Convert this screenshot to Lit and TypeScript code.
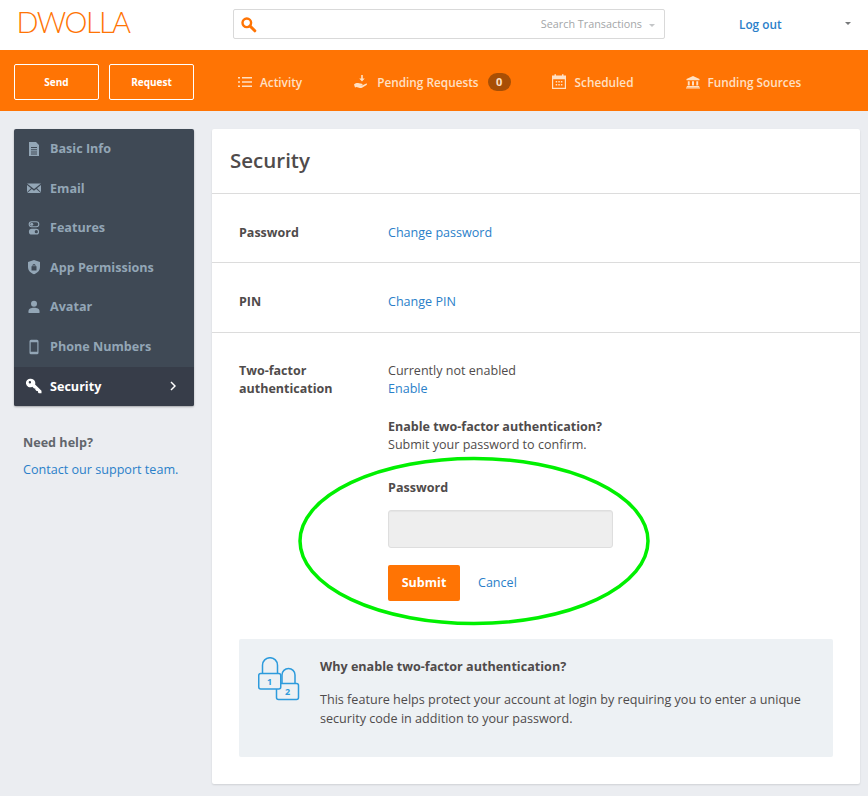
import { LitElement, html, css, svg } from "lit";
import { customElement } from "lit/decorators.js";

const ic = (body: unknown, size = 16, vb = "0 0 16 16") =>
  html`<svg width=${size} height=${size} viewBox=${vb} fill="currentColor" aria-hidden="true">${body}</svg>`;

const icons: Record<string, unknown> = {
  doc: ic(svg`<path fill-rule="evenodd" d="M3 1h7l3 3v11H3V1zm2 5v1h6V6H5zm0 2.200v1h6v-1H5zm0 2.200v1h6v-1H5zm0 2.200v.9h6v-.9H5z"/>`),
  mail: ic(svg`<path d="M1 3.500h14L8 9 1 3.500zM1 5l4 3.300L1 12.200V5zm14 0v7.200l-4-3.900L15 5zM5.800 9 8 10.800 10.200 9l4.600 4H1.200l4.600-4z"/>`),
  toggles: ic(svg`<rect x="3.200" y="1.700" width="9.600" height="5" rx="2.500" fill="none" stroke="currentColor" stroke-width="1.100"/><circle cx="5.700" cy="4.200" r="1.500"/><path fill-rule="evenodd" d="M5.800 8.800h4.400a2.900 2.900 0 0 1 0 5.800H5.800a2.900 2.900 0 0 1 0-5.800zm4.500 1.300a1.600 1.600 0 1 0 0 3.200 1.600 1.600 0 0 0 0-3.200z"/>`),
  shield: ic(svg`<path fill-rule="evenodd" d="M8 1l6 2v5c0 3.500-2.500 6-6 7.200C4.500 14 2 11.500 2 8V3l6-2zM6.500 6.500V7.300H5.500v4.200h5V7.300h-1V6.500a1.500 1.500 0 0 0-3 0zm.9.800v-.8a.6.600 0 0 1 1.200 0v.8H7.400z"/>`),
  user: ic(svg`<circle cx="8" cy="4.800" r="3"/><path d="M2.500 14v-1.800C2.500 9.800 5 8.800 8 8.800s5.500 1 5.500 3.400V14h-11z"/>`),
  phone: ic(svg`<path fill-rule="evenodd" d="M5 .8h6A1.500 1.500 0 0 1 12.500 2.300v11.400A1.500 1.500 0 0 1 11 15.200H5a1.500 1.500 0 0 1-1.500-1.500V2.300A1.500 1.500 0 0 1 5 .8zm-.3 2.400v9.600h6.600V3.200H4.700z"/>`),
  key: ic(svg`<path fill-rule="evenodd" d="M5 .8a4.300 4.300 0 0 1 4.100 5.600l6.400 6.300v2.500h-2.700l-.9-.9v-1.300h-1.300L9.300 11.700v-1.200H8.100L6.300 8.800A4.300 4.300 0 1 1 5 .8zM3.900 3a1.200 1.200 0 1 0 0 2.400 1.200 1.200 0 0 0 0-2.400z"/>`),
  list: ic(svg`<path d="M1 3h2v1.600H1zM5 3h10v1.600H5zM1 7.200h2v1.600H1zM5 7.200h10v1.600H5zM1 11.400h2V13H1zM5 11.400h10V13H5z"/>`),
  hand: ic(svg`<path d="M7.200 1h1.600v3.500h2L8 7.600 5.200 4.500h2V1z"/><path d="M0 10.500c1.800-1.600 3.400-1.800 5-1.300l2.800.6c1.200.3 1 1.600-.2 1.500l-2-.2 2.400.5 3.800-1.900c1-.4 1.700.5.800 1.200l-4.600 2.900c-1 .5-2 .3-3 0l-2.500-.8-1.500.6L0 10.500z"/>`),
  cal: ic(svg`<path fill-rule="evenodd" d="M0 1.500h2.500V.3H4v1.200h6V.3h1.500v1.200H14V15H0V1.500zm1.200 3.800v8.500h11.600V5.300H1.200zM3.700 7h1.500v1.500H3.700zm2.600 0h1.500v1.500H6.300zm2.600 0h1.500v1.500H8.900zM3.700 10h1.500v1.500H3.700zm2.600 0h1.500v1.500H6.300zm2.600 0h1.500v1.500H8.900z"/>`),
  bank: ic(svg`<path d="M8 2l6.500 3.100V6.300h-13V5.100L8 2zM2.800 7.200h1.900v4.200H2.800zM7 7.200h2v4.200H7zM11.300 7.200h1.900v4.200h-1.900zM1.800 12h12.400v1.200H1.800zM1 13.500h14V14.500H1z"/>`),
};

const navItems = [
  ["doc", "Basic Info"],
  ["mail", "Email"],
  ["toggles", "Features"],
  ["shield", "App Permissions"],
  ["user", "Avatar"],
  ["phone", "Phone Numbers"],
];

@customElement("app-root")
export class AppRoot extends LitElement {
  static styles = css`
    :host {
      display: block;
      position: relative;
      min-height: 796px;
      background: #ebedf1;
      font-family: "Open Sans", sans-serif;
      font-size: 12.550px;
      color: #4f4b4b;
      overflow: hidden;
    }
    a { color: #2a80c9; text-decoration: none; }
    .top {
      height: 50px;
      background: #fff;
      display: flex;
      align-items: flex-start;
    }
    .logo {
      width: 233px;
      box-sizing: border-box;
      padding: 4px 0 0 16.500px;
      font-family: Lato, sans-serif;
      font-weight: 300;
      font-size: 29px;
      line-height: 36px;
      letter-spacing: -1.600px;
      color: #ff7404;
    }
    .search {
      margin-top: 9px;
      width: 432px;
      height: 30px;
      box-sizing: border-box;
      border: 1px solid #d9d9d9;
      border-radius: 2px;
      display: flex;
      align-items: center;
      padding: 0 9px 0 6px;
      color: #a3a6a8;
      font-size: 10.800px;
    }
    .search .q { color: #ff7404; display: flex; }
    .search .ph { margin-left: auto; padding-bottom: 2px; }
    .caret {
      width: 0; height: 0;
      border-left: 3px solid transparent;
      border-right: 3px solid transparent;
      border-top: 3px solid #c4c6c8;
      margin-left: 7px;
      margin-top: 2px;
    }
    .logout {
      flex: 1;
      display: flex;
      align-items: center;
      height: 48px;
      padding: 0 17px 0 74px;
      font-weight: 600;
      font-size: 11.800px;
    }
    .logout .caret {
      margin-left: auto;
      margin-top: -1px;
      border-top: 3px solid #77797b;
    }
    .bar {
      height: 61px;
      box-sizing: border-box;
      padding: 3px 0 0 14px;
      background: #ff7404;
      display: flex;
      align-items: center;
      color: #ffe0c4;
      font-weight: 600;
      font-size: 11.800px;
    }
    .btn {
      height: 36px;
      width: 85px;
      box-sizing: border-box;
      border: 1px solid #fff;
      border-radius: 2px;
      color: #fff;
      font-size: 10px;
      font-weight: 700;
      display: flex;
      align-items: center;
      justify-content: center;
    }
    .btn + .btn { margin-left: 10px; }
    .tab {
      display: flex;
      align-items: center;
      gap: 7px;
      margin-top: -1px;
    }
    .tab svg { flex: none; }
    .t1 { margin-left: 43px; }
    .t2 { margin-left: 52px; }
    .t3 { margin-left: 41px; }
    .t4 { margin-left: 51px; }
    .badge {
      background: #a84f05;
      border-radius: 9px;
      color: #ffe0c4;
      width: 23px;
      height: 18px;
      font-size: 11px;
      font-weight: 700;
      display: flex;
      align-items: center;
      justify-content: center;
      margin-left: 2px;
    }
    .main {
      display: flex;
      align-items: flex-start;
      padding: 18px 8px 0 14px;
      gap: 18px;
    }
    .side { width: 180px; flex: none; }
    .nav {
      background: #3f4955;
      border-radius: 2px;
      box-shadow: 0 1px 2px rgba(0,0,0,.3);
      overflow: hidden;
    }
    .item {
      height: 39.550px;
      display: flex;
      align-items: center;
      padding-left: 12px;
      gap: 8px;
      color: #93a6b6;
      font-weight: 700;
      font-size: 12.600px;
    }
    .item.on {
      height: 39px;
      margin-top: 0.700px;
      background: #373d49;
      color: #fff;
    }
    .item .chev { margin-left: auto; margin-right: 18px; display: flex; }
    .help { padding: 28px 0 0 9px; font-size: 12.600px; }
    .help b { display: block; font-weight: 700; color: #62666c; line-height: 18px; }
    .help a { display: block; margin-top: 9px; line-height: 18px; }
    .card {
      flex: 1;
      height: 655px;
      background: #fff;
      border-radius: 2px;
      box-shadow: 0 1px 2px rgba(0,0,0,.12);
    }
    h1 {
      margin: 0;
      height: 65px;
      box-sizing: border-box;
      padding: 14px 0 0 18px;
      font-size: 20.500px;
      line-height: 35px;
      font-weight: 600;
      color: #4f4b4b;
      border-bottom: 1px solid #dcdcdc;
    }
    .row {
      display: flex;
      padding: 9px 27px 0;
      border-bottom: 1px solid #dcdcdc;
      height: 69px;
      box-sizing: border-box;
      align-items: center;
      line-height: 18px;
    }
    .row.tall { height: 70px; }
    .label { width: 149px; flex: none; font-weight: 700; font-size: 12.500px; }
    .tf { padding: 29px 27px 0; display: flex; line-height: 18px; }
    .tf .label { line-height: 18px; }
    .tf .col { flex: 1; }
    .tf a, .tf span { display: block; }
    .q2 { margin-top: 19px; font-weight: 700; line-height: 19px; }
    .pw { margin-top: 25px; font-weight: 700; }
    .input {
      margin-top: 13px;
      width: 225px;
      height: 38px;
      box-sizing: border-box;
      background: #eeeeee;
      border: 1px solid #dedede;
      border-radius: 3px;
      box-shadow: inset 0 1px 1px rgba(0,0,0,.04);
    }
    .actions { margin-top: 17px; display: flex; align-items: center; gap: 18px; }
    .submit {
      width: 72px;
      height: 36px;
      background: #ff7404;
      border-radius: 2px;
      color: #fff;
      font-weight: 700;
      display: flex;
      align-items: center;
      justify-content: center;
    }
    .why {
      margin: 38px 27px 0;
      height: 118px;
      background: #edf1f4;
      border-radius: 2px;
      display: flex;
      box-sizing: border-box;
      padding: 18px 20px 0 18px;
      line-height: 20px;
    }
    .why svg { flex: none; margin-right: 19px; }
    .why b { display: block; font-weight: 700; font-size: 12.600px; }
    .why p { margin: 13px 0 0; font-size: 12.600px; line-height: 19px; }
    .ring {
      position: absolute;
      left: 297px;
      top: 456px;
      pointer-events: none;
    }
  `;

  render() {
    return html`
      <div class="top">
        <div class="logo">DWOLLA</div>
        <div class="search">
          <span class="q">
            <svg width="17" height="17" viewBox="0 0 17 17" fill="none" stroke="currentColor">
              <circle cx="6.800" cy="6.800" r="4.300" stroke-width="2.400"/>
              <path d="M10 10l4.800 4.800" stroke-width="3" stroke-linecap="round"/>
            </svg>
          </span>
          <span class="ph">Search Transactions</span>
          <span class="caret"></span>
        </div>
        <div class="logout"><a href="#">Log out</a><span class="caret"></span></div>
      </div>
      <div class="bar">
        <div class="btn">Send</div>
        <div class="btn">Request</div>
        <div class="tab t1">${icons.list}<span>Activity</span></div>
        <div class="tab t2">${icons.hand}<span>Pending Requests</span><span class="badge">0</span></div>
        <div class="tab t3">${icons.cal}<span>Scheduled</span></div>
        <div class="tab t4">${icons.bank}<span>Funding Sources</span></div>
      </div>
      <div class="main">
        <div class="side">
          <div class="nav">
            ${navItems.map(([i, t]) => html`<div class="item">${icons[i]}<span>${t}</span></div>`)}
            <div class="item on">
              ${icons.key}<span>Security</span>
              <span class="chev">
                <svg width="6" height="10" viewBox="0 0 6 10" fill="none" stroke="currentColor" stroke-width="1.500"><path d="M1 1l4 4-4 4"/></svg>
              </span>
            </div>
          </div>
          <div class="help">
            <b>Need help?</b>
            <a href="#">Contact our support team.</a>
          </div>
        </div>
        <div class="card">
          <h1>Security</h1>
          <div class="row"><div class="label">Password</div><a href="#">Change password</a></div>
          <div class="row tall"><div class="label">PIN</div><a href="#">Change PIN</a></div>
          <div class="tf">
            <div class="label">Two-factor<br />authentication</div>
            <div class="col">
              <span>Currently not enabled</span>
              <a href="#">Enable</a>
              <div class="q2">Enable two-factor authentication?</div>
              <span>Submit your password to confirm.</span>
              <div class="pw">Password</div>
              <div class="input"></div>
              <div class="actions">
                <div class="submit">Submit</div>
                <a href="#">Cancel</a>
              </div>
            </div>
          </div>
          <div class="why">
            <svg width="44" height="44" viewBox="0 0 44 44" fill="none" stroke="#2d9bdc" stroke-width="1.500">
              <path d="M25 26.500V18a6.500 6.500 0 0 1 13 0v8.500"/>
              <rect x="19.500" y="26.500" width="22" height="16" rx="2"/>
              <path d="M5.500 16.500V8.200a7.500 7.500 0 0 1 15 0v8.300"/>
              <rect x="1.750" y="16.500" width="22" height="15.500" rx="2" fill="#edf1f4"/>
              <text x="12.500" y="27.500" text-anchor="middle" font-family="Open Sans" font-size="9" font-weight="700" fill="#2d9bdc" stroke="none">1</text>
              <text x="30.500" y="38" text-anchor="middle" font-family="Open Sans" font-size="9" font-weight="700" fill="#2d9bdc" stroke="none">2</text>
            </svg>
            <div>
              <b>Why enable two-factor authentication?</b>
              <p>This feature helps protect your account at login by requiring you to enter a unique security code in addition to your password.</p>
            </div>
          </div>
        </div>
      </div>
      <svg class="ring" width="354" height="172" viewBox="0 0 354 172" fill="none">
        <ellipse cx="177" cy="85" rx="174" ry="82.500" stroke="#00f000" stroke-width="3.500"/>
      </svg>
    `;
  }
}
